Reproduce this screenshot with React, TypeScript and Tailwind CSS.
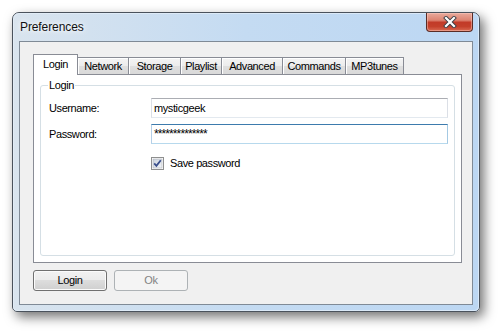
import React from "react";

const tabs: { label: string; w: string }[] = [
  { label: "Network", w: "w-[52px]" },
  { label: "Storage", w: "w-[53px]" },
  { label: "Playlist", w: "w-[42px]" },
  { label: "Advanced", w: "w-[62px]" },
  { label: "Commands", w: "w-[64px]" },
  { label: "MP3tunes", w: "w-[59px]" },
];

function CloseGlyph() {
  return (
    <svg width="14" height="12" viewBox="0 0 14 12">
      <path d="M3 2 L11 10 M11 2 L3 10" stroke="#3b3f46" strokeWidth="4" strokeLinecap="square" fill="none" />
      <path d="M3 2 L11 10 M11 2 L3 10" stroke="#ffffff" strokeWidth="2.2" strokeLinecap="square" fill="none" />
    </svg>
  );
}

function CheckBox() {
  return (
    <svg width="13" height="13" viewBox="0 0 13 13">
      <defs>
        <linearGradient id="cbg" x1="0" y1="0" x2="1" y2="1">
          <stop offset="0" stopColor="#c9d1dc" />
          <stop offset="1" stopColor="#f4f6f9" />
        </linearGradient>
      </defs>
      <rect x="0.5" y="0.5" width="12" height="12" fill="#ffffff" stroke="#8e8f8f" />
      <rect x="2" y="2" width="9" height="9" fill="url(#cbg)" stroke="#aeb3b9" strokeWidth="0.6" />
      <path d="M3.2 6.4 L5.4 8.8 L9.8 3.2" stroke="#3a4f8c" strokeWidth="1.8" fill="none" />
    </svg>
  );
}

export default function App() {
  const ui = "font-['Liberation_Sans',Arial,sans-serif] text-[11px] tracking-[-0.4px] text-black";
  return (
    <div className="w-[500px] h-[332px] bg-white pl-[12px] pt-[12px] overflow-hidden">
      <div className="relative w-[468px] h-[300px] rounded-t-[7px] rounded-b-[5px] border border-[#4a525c] bg-gradient-to-r from-[#d9e4ee] via-[#c4dbf2] to-[#bcd7f3] shadow-[4px_5px_12px_rgba(0,0,0,0.55)] flex flex-col">
        <div className="absolute inset-0 rounded-t-[6px] rounded-b-[4px] border border-[#e6f0fa]/70 pointer-events-none" />
        {/* title bar */}
        <div className="h-[28px] pl-[7px] pt-[7px] font-['Liberation_Sans',Arial,sans-serif] text-[12px] leading-[14px] tracking-[-0.1px] text-[#111] [text-shadow:0_0_8px_#ffffff,0_0_4px_#ffffff]">
          Preferences
        </div>
        {/* close button */}
        <div className="absolute top-0 right-[6px] w-[47px] h-[19px] rounded-b-[4px] border border-t-0 border-[#5a2c26] bg-[linear-gradient(to_bottom,#e9aa9c_0%,#dd8472_40%,#c23a28_52%,#c4402b_75%,#d96a52_100%)] shadow-[inset_0_0_0_1px_rgba(255,210,200,0.45)] flex items-center justify-center">
          <CloseGlyph />
        </div>
        {/* client area */}
        <div className="mx-[6px] h-[264px] border border-[#7f8a96] bg-[#f0f0f0] pt-[12px] pl-[13px] flex flex-col">
          <div className={`${ui} flex items-end h-[20px]`}>
            <div className="relative z-10 w-[45px] h-[21px] -mb-px border border-b-0 border-[#898c95] bg-white flex items-center justify-center pb-[2px]">
              Login
            </div>
            {tabs.map((t) => (
              <div
                key={t.label}
                className={`${t.w} h-[17px] -ml-px border border-b-0 border-[#898c95] bg-[linear-gradient(to_bottom,#f4f4f4_0%,#ececec_50%,#dfdfdf_50%,#d9d9d9_100%)] shadow-[inset_1px_1px_0_#ffffff] flex items-center justify-center`}
              >
                {t.label}
              </div>
            ))}
          </div>
          {/* tab panel */}
          <div className="w-[429px] h-[189px] border border-[#898c95] bg-white pt-[10px] px-[6px] pb-[6px]">
            <div className={`${ui} relative h-[171px] rounded-[3px] border border-[#d5dfe5] shadow-[inset_1px_1px_0_#ffffff]`}>
              <div className="absolute -top-[7px] left-[7px] bg-white px-[1px] leading-[13px]">Login</div>
              <div className="pl-[8px] pt-[12px] flex flex-col gap-[6px]">
                <div className="flex items-center">
                  <div className="w-[102px]">Username:</div>
                  <div className="w-[297px] h-[20px] border border-t-[#abadb3] border-x-[#dbdfe6] border-b-[#e3e9ef] bg-white flex items-center pl-[2px]">
                    mysticgeek
                  </div>
                </div>
                <div className="flex items-center">
                  <div className="w-[102px]">Password:</div>
                  <div className="w-[297px] h-[20px] border border-t-[#3d7bad] border-l-[#b5cfe7] border-r-[#a4c9e3] border-b-[#b7d9ed] bg-white flex items-center pl-[2px] text-[12px] tracking-[-0.9px]">
                    **************
                  </div>
                </div>
                <div className="flex items-center pl-[102px] mt-[5px] gap-[6px]">
                  <CheckBox />
                  <span>Save password</span>
                </div>
              </div>
            </div>
          </div>
          {/* buttons */}
          <div className={`${ui} flex gap-[7px] mt-[7px]`}>
            <div className="w-[74px] h-[21px] rounded-[3px] border border-[#707070] bg-[linear-gradient(to_bottom,#f2f2f2_0%,#ebebeb_50%,#dddddd_50%,#cfcfcf_100%)] shadow-[inset_0_0_0_1px_#fbfbfb] flex items-center justify-center">
              Login
            </div>
            <div className="w-[74px] h-[21px] rounded-[3px] border border-[#adb2b5] bg-[#f4f4f4] text-[#838383] flex items-center justify-center">
              Ok
            </div>
          </div>
        </div>
      </div>
    </div>
  );
}
